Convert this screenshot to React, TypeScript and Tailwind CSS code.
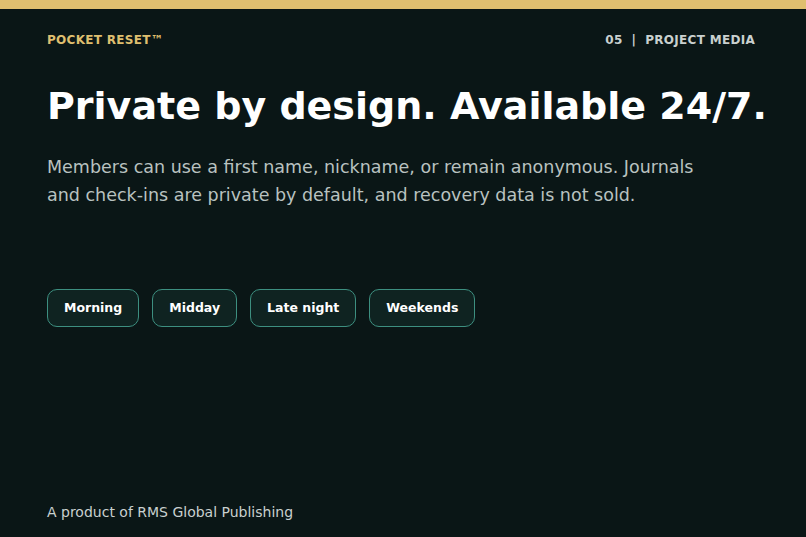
export default function App() {
  const chips = ['Morning', 'Midday', 'Late night', 'Weekends'];
  return (
    <div className="w-[806px] h-[537px] bg-[#0a1616] flex flex-col overflow-hidden" style={{ fontFamily: '"DejaVu Sans", sans-serif' }}>
      <div className="h-[9px] bg-[#dfbf6f] shrink-0" />
      <div className="flex-1 flex flex-col px-[47px]">
        <div className="flex justify-between items-center mt-[22px] text-[12px] font-bold tracking-[0.3px]">
          <span className="text-[#dfbf6f]">POCKET RESET™</span>
          <span className="text-[#c9d0cf] pr-[4px]">05 &nbsp;|&nbsp; PROJECT MEDIA</span>
        </div>
        <h1 className="mt-[30px] text-[38px] leading-[54px] font-bold text-white whitespace-nowrap">Private by design. Available 24/7.</h1>
        <p className="mt-[20px] text-[17.5px] leading-[28px] text-[#b9c2c0] w-[670px]">
          Members can use a first name, nickname, or remain anonymous. Journals and check-ins are private by default, and recovery data is not sold.
        </p>
        <div className="flex gap-[13px] mt-[80px]">
          {chips.map(c => (
            <div key={c} className="h-[38px] px-4 flex items-center rounded-[10px] border border-[#3d8f80] bg-[#0f2321] text-white text-[12.5px] font-bold">{c}</div>
          ))}
        </div>
        <div className="mt-auto mb-[14px] text-[14px] text-[#c9d0cf]">A product of RMS Global Publishing</div>
      </div>
    </div>
  );
}
